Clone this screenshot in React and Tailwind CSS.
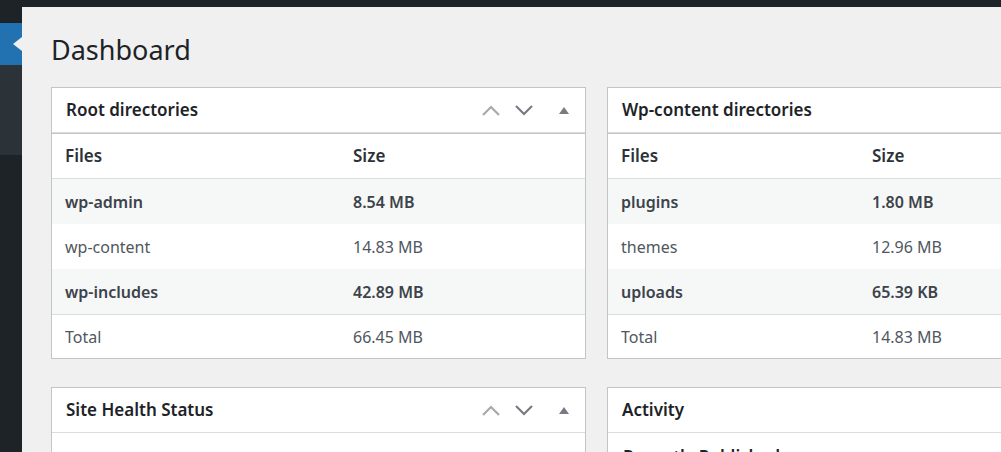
const font = { fontFamily: '"Noto Sans", "Open Sans", sans-serif' }

const rootRows = [
  { name: 'wp-admin', size: '8.54 MB', bold: true },
  { name: 'wp-content', size: '14.83 MB' },
  { name: 'wp-includes', size: '42.89 MB', bold: true },
]

const contentRows = [
  { name: 'plugins', size: '1.80 MB', bold: true },
  { name: 'themes', size: '12.96 MB' },
  { name: 'uploads', size: '65.39 KB', bold: true },
]

const Chevron = ({ up, className }) => (
  <svg width="18" height="11" viewBox="0 0 18 11" className={className}>
    <polyline
      points={up ? '1,10 9,2 17,10' : '1,1 9,9 17,1'}
      fill="none"
      stroke="currentColor"
      strokeWidth="2.2"
    />
  </svg>
)

const Controls = () => (
  <div className="flex items-center text-[#787c82]">
    <Chevron up className="text-[#a7aaad]" />
    <Chevron className="ml-[15px]" />
    <span className="ml-[26px] w-0 h-0 border-l-[5px] border-r-[5px] border-b-[7px] border-l-transparent border-r-transparent border-b-[#787c82]" />
  </div>
)

const PanelHeader = ({ title, controls }) => (
  <div className="h-[45px] flex items-center justify-between pl-[14px] pr-[16px] border-b border-[#dcdcde]">
    <h2 className="text-[17px] font-semibold text-[#1d2327]">{title}</h2>
    {controls && <Controls />}
  </div>
)

const DirTable = ({ rows, total, sizeCol }) => (
  <div className="border border-[#c3c4c7] -mx-px -mb-px">
    <div className="h-[45px] flex items-center text-[17px] font-semibold text-[#2c3338] border-b border-[#dcdcde]">
      <div className="pl-[13px]" style={{ width: sizeCol }}>Files</div>
      <div>Size</div>
    </div>
    {rows.map((r, i) => (
      <div
        key={r.name}
        className={`h-[45px] flex items-center text-[16px] ${i % 2 === 0 ? 'bg-[#f6f7f7]' : 'bg-white'} ${r.bold ? 'font-semibold text-[#3c434a]' : 'text-[#50575e]'}`}
      >
        <div className="pl-[13px]" style={{ width: sizeCol }}>{r.name}</div>
        <div>{r.size}</div>
      </div>
    ))}
    <div className="h-[44px] flex items-center text-[16px] text-[#50575e] border-t border-[#dcdcde]">
      <div className="pl-[13px]" style={{ width: sizeCol }}>Total</div>
      <div>{total}</div>
    </div>
  </div>
)

export default function App() {
  return (
    <div className="w-[1001px] h-[452px] overflow-hidden flex flex-col bg-[#f0f0f1]" style={font}>
      <div className="h-[7px] bg-[#1d2327] shrink-0" />
      <div className="flex flex-1 min-h-0">
        {/* admin menu */}
        <div className="w-[22px] shrink-0 flex flex-col bg-[#1d2327]">
          <div className="h-[16px]" />
          <div className="h-[42px] bg-[#2271b1] flex items-center justify-end">
            <span className="w-0 h-0 border-t-[7px] border-b-[7px] border-r-[9px] border-t-transparent border-b-transparent border-r-[#f0f0f1]" />
          </div>
          <div className="h-[90px] bg-[#2c3338]" />
        </div>

        {/* content */}
        <div className="flex-1 pl-[29px] pt-[23px] min-w-0">
          <h1 className="text-[27px] leading-[40px] text-[#1d2327] font-normal">Dashboard</h1>
          <div className="grid grid-cols-[535px_535px] gap-x-[21px] gap-y-[28px] mt-[17px]">
            <div className="bg-white border border-[#c3c4c7]">
              <PanelHeader title="Root directories" controls />
              <DirTable rows={rootRows} total="66.45 MB" sizeCol={301} />
            </div>
            <div className="bg-white border border-[#c3c4c7]">
              <PanelHeader title="Wp-content directories" />
              <DirTable rows={contentRows} total="14.83 MB" sizeCol={264} />
            </div>
            <div className="bg-white border border-[#c3c4c7] h-[120px]">
              <PanelHeader title="Site Health Status" controls />
              <div className="pl-[214px] pt-[13px] text-[15px] text-[#50575e]">
                Results are still loading&hellip; will appear shortly.
              </div>
            </div>
            <div className="bg-white border border-[#c3c4c7] h-[120px]">
              <PanelHeader title="Activity" />
              <div className="pl-[15px] pt-[11px] text-[17px] font-semibold text-[#1d2327]">Recently Published</div>
            </div>
          </div>
        </div>
      </div>
    </div>
  )
}
